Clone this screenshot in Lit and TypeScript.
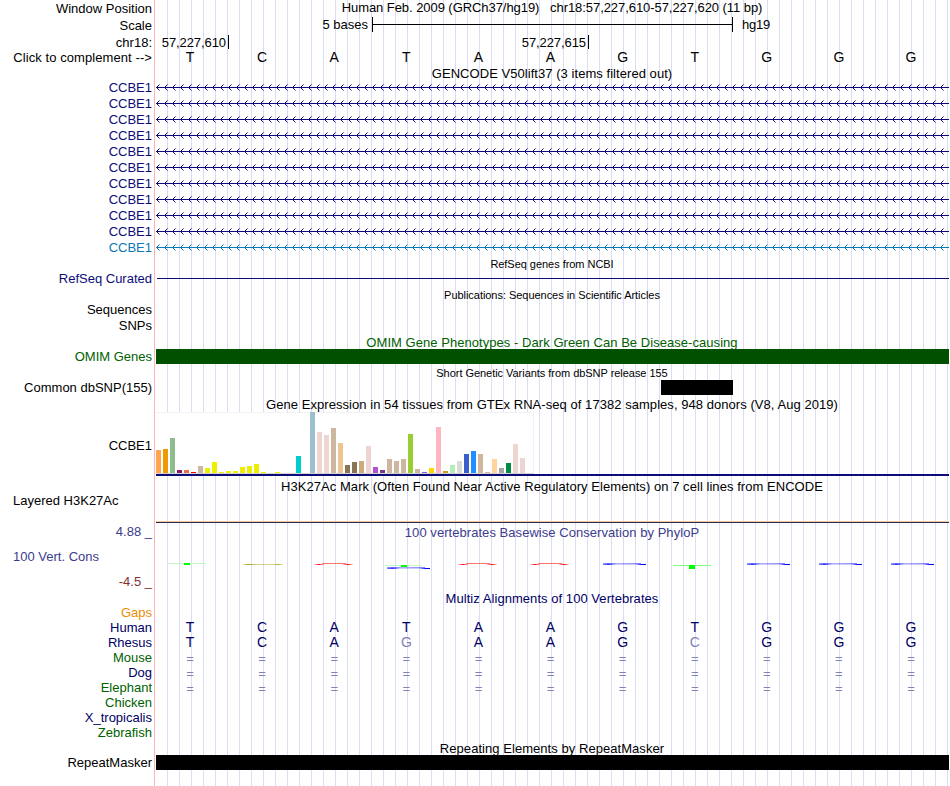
import {LitElement, css, html, svg} from 'lit'
import {customElement, property} from 'lit/decorators.js'
import {styleMap} from 'lit/directives/style-map.js'
import {classMap} from 'lit/directives/class-map.js'

const BASES = 'TCATAAGTGGG'

const TISSUES: [number, string][] = [
  [23, '#ffa54f'], [24, '#ee9a00'], [35, '#8fbc8f'], [3, '#8b1c62'], [3, '#ee6a50'],
  [1, '#ff0000'], [7, '#cdb79e'], [5, '#eeee00'], [11, '#eeee00'], [1, '#eeee00'],
  [2, '#eeee00'], [2, '#eeee00'], [6, '#eeee00'], [7, '#eeee00'], [9, '#eeee00'],
  [1, '#eeee00'], [0, '#eeee00'], [1, '#eeee00'], [0, '#eeee00'], [0, '#eeee00'],
  [17, '#00cdcd'], [0, '#ee82ee'], [61, '#9ac0cd'], [41, '#eed5d2'], [38, '#eed5d2'],
  [45, '#cdb79e'], [30, '#eec591'], [8, '#8b7355'], [11, '#8b7355'], [12, '#cdaa7d'],
  [27, '#eed5d2'], [6, '#b452cd'], [3, '#7a378b'], [14, '#cdb79e'], [12, '#cdb79e'],
  [14, '#cdb79e'], [39, '#9acd32'], [4, '#cdb79e'], [1, '#7a67ee'], [5, '#ffd700'],
  [46, '#ffb6c1'], [2, '#cd9b1d'], [8, '#b4eeb4'], [12, '#d9d9d9'], [19, '#3a5fcd'],
  [22, '#1e90ff'], [19, '#cdb79e'], [1, '#cdb79e'], [14, '#ffd39b'], [5, '#a6a6a6'],
  [10, '#008b45'], [29, '#eed5d2'], [15, '#eed5d2'], [0, '#ff00ff'],
]

const SPECIES = [
  {name: 'Gaps', tone: 'orange', seq: ''},
  {name: 'Human', tone: 'blue', seq: 'TCATAAGTGGG'},
  {name: 'Rhesus', tone: 'blue', seq: 'TCAGAAGCGGG'},
  {name: 'Mouse', tone: 'green', seq: '==========='},
  {name: 'Dog', tone: 'blue', seq: '==========='},
  {name: 'Elephant', tone: 'green', seq: '==========='},
  {name: 'Chicken', tone: 'green', seq: ''},
  {name: 'X_tropicalis', tone: 'blue', seq: ''},
  {name: 'Zebrafish', tone: 'green', seq: ''},
]

@customElement('strand-line')
export class StrandLine extends LitElement {
  static styles = css`
    :host {
      display: block;
      height: 16px;
      margin-left: 1px;
    }

    svg {
      display: block;
      width: 100%;
      height: 16px;
    }
  `

  @property() color = '#0c0c78'

  render() {
    return html`
      <svg shape-rendering="crispEdges">
        <defs>
          <pattern id="chevron" width="8" height="16" patternUnits="userSpaceOnUse">
            <path
              d="M0 7h1v1h-1zM1 6h1v1h-1zM2 5h1v1h-1zM1 8h1v1h-1zM2 9h1v1h-1z"
              fill=${this.color} />
            <path d="M3 4h1v1h-1zM3 10h1v1h-1z" fill=${this.color} opacity=".5" />
            <rect y="7" width="8" height="1" fill=${this.color} />
          </pattern>
        </defs>
        <rect width="100%" height="16" fill="url(#chevron)" />
      </svg>
    `
  }
}

@customElement('expression-chart')
export class ExpressionChart extends LitElement {
  static styles = css`
    :host {
      display: block;
      padding-left: 1px;
    }

    .bars {
      display: flex;
      align-items: flex-end;
      gap: 2px;
      box-sizing: border-box;
      width: 378px;
      height: 62px;
      background: linear-gradient(#f2f2f2, #f2f2f2) 0 0 / 100% 1px no-repeat, #fff;
      border-right: 1px solid #f2f2f2;
      border-bottom: 1px solid #d3d3d3;
    }

    .bar {
      width: 5px;
      flex: none;
    }

    .model {
      height: 2px;
      background: #0c0c78;
    }
  `

  render() {
    return html`
      <div class="bars">
        ${TISSUES.map(([height, background]) => html`
          <div class="bar" style=${styleMap({height: `${height}px`, background})}></div>
        `)}
      </div>
      <div class="model"></div>
    `
  }
}

@customElement('conservation-plot')
export class ConservationPlot extends LitElement {
  static styles = css`
    :host,
    svg {
      display: block;
    }
  `

  flatA(x: number) {
    return svg`
      <rect x=${x} y="39" width="10" height="1" fill="url(#fadeIn)" />
      <rect x=${x + 8} y="38" width="24" height="1" fill="#ff5050" opacity=".8" />
      <rect x=${x + 29} y="39" width="10" height="1" fill="url(#fadeOut)" />
    `
  }

  flatG(x: number, y = 38) {
    return svg`
      <rect x=${x} y=${y} width="38" height="1" fill="url(#blueTop)" />
      <rect x=${x} y=${y + 1} width="43" height="1" fill="url(#blueLow)" />
    `
  }

  render() {
    return html`
      <svg width="794" height="51" viewBox="0 14 794 51" shape-rendering="crispEdges">
        <defs>
          <linearGradient id="fadeIn">
            <stop stop-color="#f00" stop-opacity=".15" />
            <stop offset=".5" stop-color="#f00" />
            <stop offset="1" stop-color="#f00" stop-opacity=".2" />
          </linearGradient>
          <linearGradient id="fadeOut">
            <stop stop-color="#f00" stop-opacity=".2" />
            <stop offset=".5" stop-color="#f00" />
            <stop offset="1" stop-color="#f00" stop-opacity=".15" />
          </linearGradient>
          <linearGradient id="olive">
            <stop stop-color="#aaaa00" stop-opacity=".2" />
            <stop offset=".12" stop-color="#a0a000" />
            <stop offset=".3" stop-color="#a0a000" stop-opacity=".5" />
            <stop offset=".75" stop-color="#a0a000" stop-opacity=".4" />
            <stop offset=".88" stop-color="#a0a000" stop-opacity=".9" />
            <stop offset="1" stop-color="#aaaa00" stop-opacity=".15" />
          </linearGradient>
          <linearGradient id="blueTop">
            <stop stop-color="#00f" stop-opacity=".4" />
            <stop offset=".15" stop-color="#00f" stop-opacity=".6" />
            <stop offset=".4" stop-color="#00f" stop-opacity=".3" />
            <stop offset="1" stop-color="#00f" stop-opacity=".5" />
          </linearGradient>
          <linearGradient id="blueLow">
            <stop stop-color="#00f" stop-opacity=".5" />
            <stop offset=".13" stop-color="#00f" stop-opacity=".8" />
            <stop offset=".3" stop-color="#00f" stop-opacity=".2" />
            <stop offset=".75" stop-color="#00f" stop-opacity=".2" />
            <stop offset=".9" stop-color="#00f" />
            <stop offset="1" stop-color="#00f" />
          </linearGradient>
        </defs>
        <rect x="13" y="38" width="38" height="1" fill="#c0fac0" />
        <rect x="29" y="38" width="6" height="2" fill="#0f0" />
        <rect x="88" y="39" width="40" height="1" fill="url(#olive)" />
        ${this.flatA(159)}
        <rect x="230" y="40" width="37" height="1" fill="#c0fac0" />
        <rect x="246" y="40" width="6" height="2" fill="#0f0" />
        ${this.flatG(232, 42)}
        ${this.flatA(303)}
        ${this.flatA(375)}
        ${this.flatG(448)}
        <rect x="518" y="40" width="38" height="1" fill="#80fc80" />
        <rect x="534" y="40" width="6" height="4" fill="#0f0" />
        ${this.flatG(592)}
        ${this.flatG(664)}
        ${this.flatG(736)}
      </svg>
    `
  }
}

@customElement('app-root')
export class GenomeTracks extends LitElement {
  static styles = css`
    :host {
      display: block;
      width: 950px;
      height: 786px;
      overflow: hidden;
      background: #fff;
      color: #000;
      font: 13px/16px "Liberation Sans", Arial, sans-serif;
      white-space: nowrap;
    }

    .tracks {
      width: 949px;
      height: 786px;
      background:
        linear-gradient(#ffb4b4, #ffb4b4) 154px 0 / 1px 100% no-repeat,
        repeating-linear-gradient(90deg, #dcdcf5 0 1px, transparent 1px 12px) 167px 0 / 782px 100% no-repeat;
    }

    .row {
      display: grid;
      grid-template-columns: 155px 794px;
      height: 16px;
    }

    .label {
      padding-right: 3px;
      text-align: right;
    }

    .label.left {
      padding-left: 13px;
      text-align: left;
    }

    .title {
      height: 15px;
      margin-left: 155px;
      line-height: 17px;
      letter-spacing: 0.05px;
      text-align: center;
    }

    .small {
      font-size: 11px;
      letter-spacing: -0.04px;
    }

    .navy {
      color: #0c0c78;
    }

    .sky {
      color: #0c78b4;
    }

    .orange {
      color: #ee8c00;
    }

    .blue {
      color: #000064;
    }

    .green {
      color: #005f00;
    }

    .phylo {
      color: #3c3c8c;
    }

    .maroon {
      color: #823232;
    }

    .position {
      height: 17px;
    }

    .position .label,
    .scale .label,
    .ruler {
      line-height: 18px;
    }

    .assembly {
      text-align: center;
      line-height: 15px;
      letter-spacing: -0.06px;
      white-space: pre;
    }

    .scale {
      height: 18px;
    }

    .ruler {
      display: flex;
    }

    .ruler .size {
      width: 213px;
      padding-right: 4px;
      line-height: 16px;
      text-align: right;
    }

    .ruler .span {
      width: 359px;
      height: 15px;
      margin-right: 9px;
      border: solid #000;
      border-width: 0 1px;
      background: linear-gradient(#000, #000) 0 7px / 100% 1px no-repeat;
    }

    .ruler .build {
      line-height: 16px;
      letter-spacing: -0.2px;
    }

    .ticks {
      display: flex;
    }

    .tick {
      box-sizing: border-box;
      width: 360px;
      height: 14px;
      padding-right: 2px;
      border-right: 1px solid #000;
      letter-spacing: -0.08px;
      text-align: right;
    }

    .tick.first {
      width: 74px;
    }

    .chrom {
      height: 15px;
    }

    .sequence .label {
      letter-spacing: 0.08px;
    }

    .sequence .bases {
      line-height: 14px;
    }

    .bases {
      display: grid;
      grid-template-columns: repeat(11, 72.1px);
      margin-left: -1px;
      text-align: center;
      font-size: 14px;
    }

    .aligned {
      height: 15px;
      line-height: 15px;
    }

    .faded {
      color: #8282b4;
    }

    .unaligned {
      font-size: 13px;
      line-height: 18px;
    }

    .first-title {
      height: 14px;
      line-height: 15px;
    }

    .bar {
      height: 15px;
      margin-left: 1px;
    }

    .bar.omim {
      background: #005000;
    }

    .bar.repeat {
      background: #000;
    }

    .bar.snp {
      width: 72px;
      margin-left: 506px;
      background: #000;
    }

    .thin {
      height: 1px;
      margin: 7px 0 0 2px;
      background: #0c0c78;
    }

    .expression {
      height: 67px;
      padding-top: 1px;
      box-sizing: border-box;
    }

    .expression .label {
      padding-top: 26px;
    }

    .histone {
      height: 31px;
    }

    .floor {
      height: 1px;
      margin: 28px 0 0 1px;
      border-top: 1px solid #f5c896;
      background: #28284b;
    }

    .conservation {
      height: 66px;
    }

    .conservation .title {
      margin-left: 0;
    }

    .limits {
      display: flex;
      flex-direction: column;
    }

    .limits .left {
      margin: 9px 0;
    }
  `

  track(label: string, content: unknown = '', tone = '') {
    return html`
      <div class="row">
        <div class="label ${tone}">${label}</div>
        <div>${content}</div>
      </div>
    `
  }

  title(text: string, tone = '') {
    return html`<div class="title ${tone}">${text}</div>`
  }

  bases(seq: string) {
    return html`
      <div class="bases">
        ${[...seq].map((base, i) => html`
          <span class=${classMap({faded: base !== BASES[i], unaligned: base === '='})}>${base}</span>
        `)}
      </div>
    `
  }

  render() {
    return html`
      <div class="tracks">
        <div class="row position">
          <div class="label">Window Position</div>
          <div class="assembly">Human Feb. 2009 (GRCh37/hg19)   chr18:57,227,610-57,227,620 (11 bp)</div>
        </div>
        <div class="row scale">
          <div class="label">Scale</div>
          <div class="ruler"><span class="size">5 bases</span><span class="span"></span><span class="build">hg19</span></div>
        </div>
        <div class="row chrom">
          <div class="label">chr18:</div>
          <div class="ticks"><span class="tick first">57,227,610</span><span class="tick">57,227,615</span></div>
        </div>
        <div class="row sequence">
          <div class="label">Click to complement --&gt;</div>
          ${this.bases(BASES)}
        </div>
        ${this.title('GENCODE V50lift37 (3 items filtered out)', 'first-title')}
        ${Array.from({length: 11}, (_, i) => i < 10
          ? this.track('CCBE1', html`<strand-line></strand-line>`, 'navy')
          : this.track('CCBE1', html`<strand-line color="#0c78b4"></strand-line>`, 'sky'))}
        ${this.title('RefSeq genes from NCBI', 'small')}
        ${this.track('RefSeq Curated', html`<div class="thin"></div>`, 'navy')}
        ${this.title('Publications: Sequences in Scientific Articles', 'small')}
        ${this.track('Sequences')}
        ${this.track('SNPs')}
        ${this.title('OMIM Gene Phenotypes - Dark Green Can Be Disease-causing', 'green')}
        ${this.track('OMIM Genes', html`<div class="bar omim"></div>`, 'green')}
        ${this.title('Short Genetic Variants from dbSNP release 155', 'small')}
        ${this.track('Common dbSNP(155)', html`<div class="bar snp"></div>`)}
        ${this.title('Gene Expression in 54 tissues from GTEx RNA-seq of 17382 samples, 948 donors (V8, Aug 2019)')}
        <div class="row expression">
          <div class="label">CCBE1</div>
          <expression-chart></expression-chart>
        </div>
        ${this.title('H3K27Ac Mark (Often Found Near Active Regulatory Elements) on 7 cell lines from ENCODE')}
        <div class="row histone">
          <div class="label left">Layered H3K27Ac</div>
          <div><div class="floor"></div></div>
        </div>
        <div class="row conservation">
          <div class="limits">
            <div class="label phylo">4.88 _</div>
            <div class="label left phylo">100 Vert. Cons</div>
            <div class="label maroon">-4.5 _</div>
          </div>
          <div>
            ${this.title('100 vertebrates Basewise Conservation by PhyloP', 'phylo')}
            <conservation-plot></conservation-plot>
          </div>
        </div>
        ${this.title('Multiz Alignments of 100 Vertebrates', 'blue')}
        ${SPECIES.map(({name, tone, seq}) => html`
          <div class="row aligned">
            <div class="label ${tone}">${name}</div>
            <div class="blue">${this.bases(seq)}</div>
          </div>
        `)}
        ${this.title('Repeating Elements by RepeatMasker')}
        ${this.track('RepeatMasker', html`<div class="bar repeat"></div>`)}
      </div>
    `
  }
}
